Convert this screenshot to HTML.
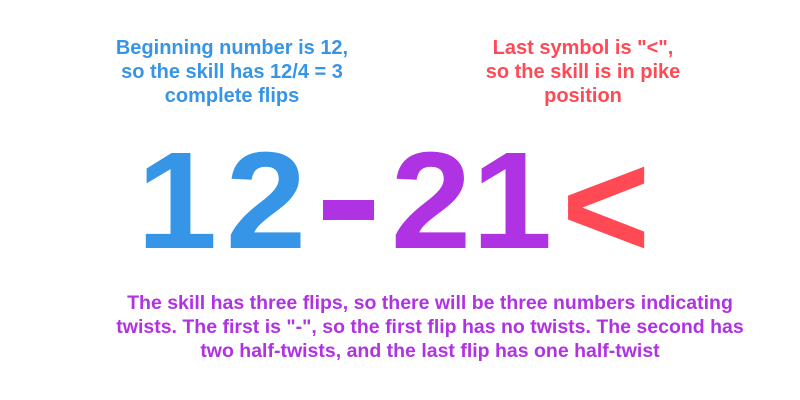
<!DOCTYPE html>
<html><head><style>
body{margin:0;width:800px;height:400px;background:#fff;position:relative;overflow:hidden;font-family:"Liberation Sans",sans-serif;font-weight:bold}
.t{position:absolute;text-align:center;font-size:20px;line-height:24px}
.c{position:absolute;top:116px;font-size:138px;line-height:170px;text-align:center}
.b{color:#3795E8}.p{color:#B033E3}.r{color:#FF4A55}
</style></head><body>
<div class="t b" style="left:82px;width:300px;top:36px">Beginning number is 12,<br>so the skill has 12/4 = 3<br>complete flips</div>
<div class="t r" style="left:433px;width:300px;top:36px">Last symbol is "&lt;",<br>so the skill is in pike<br>position</div>
<div class="c b" style="left:137px;width:80px;transform:scaleX(1.05)">1</div>
<div class="c b" style="left:222px;width:88px;transform:scaleX(1.05)">2</div>
<div style="position:absolute;left:323px;top:200px;width:51px;height:20px;background:#B033E3;color:transparent;font-size:10px">-</div>
<div class="c p" style="left:387px;width:88px;transform:scaleX(1.05)">2</div>
<div class="c p" style="left:472px;width:80px;transform:scaleX(1.05)">1</div>
<div class="c r" style="left:561px;width:90px;top:121px;transform:scale(1.1,1.1)">&lt;</div>
<div class="t p" style="left:60px;width:740px;top:291px;font-size:19.5px">The skill has three flips, so there will be three numbers indicating<br>twists. The first is "-", so the first flip has no twists. The second has<br>two half-twists, and the last flip has one half-twist</div>
</body></html>
